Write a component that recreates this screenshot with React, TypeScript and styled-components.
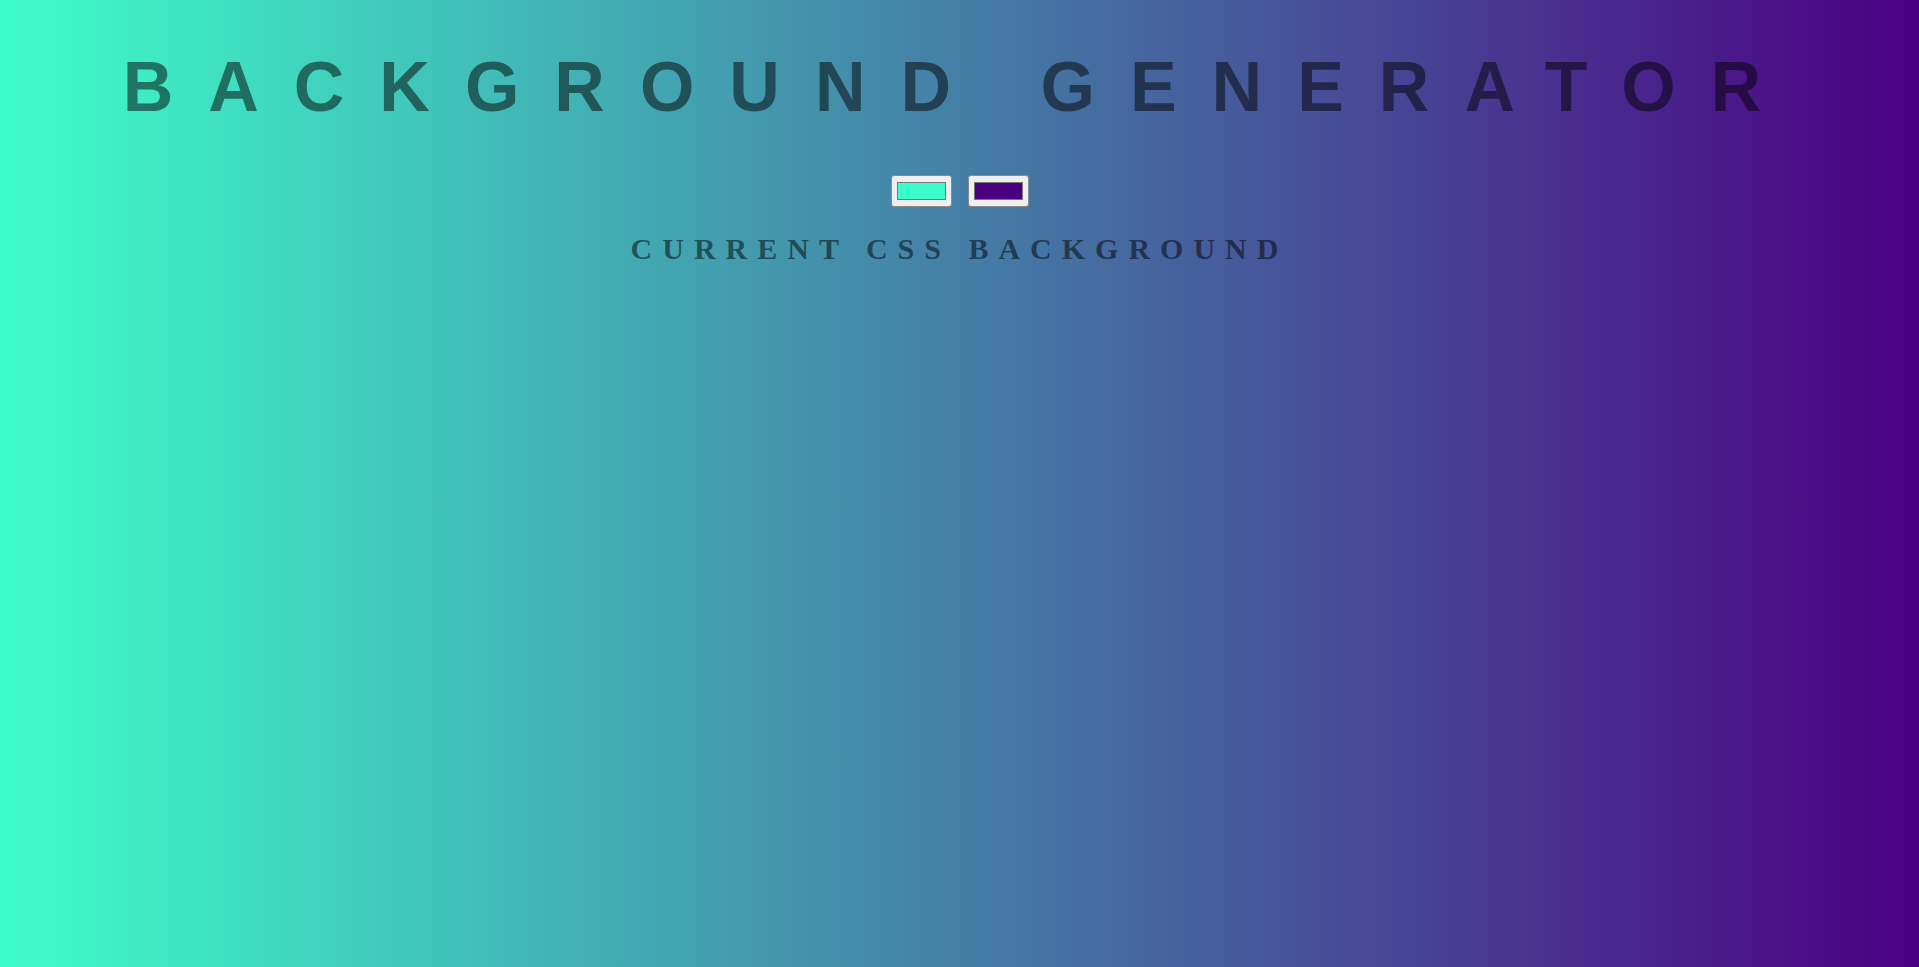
import React, { useState } from "react";
import styled, { createGlobalStyle } from "styled-components";

const GlobalStyle = createGlobalStyle`
  html, body {
    margin: 0;
    padding: 0;
  }
  body {
    font-family: "Liberation Sans", Arial, sans-serif;
  }
`;

const Page = styled.div<{ $from: string; $to: string }>`
  min-height: 100vh;
  box-sizing: border-box;
  padding-top: 47px;
  display: flex;
  flex-direction: column;
  align-items: center;
  background: linear-gradient(to right, ${(p) => p.$from}, ${(p) => p.$to});
  color: rgba(0, 0, 0, 0.5);
  text-transform: uppercase;
`;

const Title = styled.h1`
  margin: 0 0 48px;
  font-family: "Liberation Sans", Arial, sans-serif;
  font-weight: 700;
  font-size: 70px;
  line-height: normal;
  letter-spacing: 0.5em;
  white-space: nowrap;
`;

const Pickers = styled.div`
  display: flex;
  gap: 16px;
  height: 32px;
`;

const ColorInput = styled.input`
  -webkit-appearance: none;
  appearance: none;
  box-sizing: border-box;
  width: 61px;
  height: 32px;
  margin: 0;
  padding: 0;
  border: 1px solid #8a8a8a;
  border-radius: 3px;
  background: #efefef;
  cursor: pointer;

  &::-webkit-color-swatch-wrapper {
    padding: 6px 5px;
  }
  &::-webkit-color-swatch {
    border: 1px solid #777777;
    border-radius: 0;
  }
`;

const Subtitle = styled.h3`
  margin: 25px 0 0;
  font-family: "Liberation Serif", "Times New Roman", serif;
  font-weight: 700;
  font-size: 30px;
  line-height: normal;
  letter-spacing: 10px;
  white-space: nowrap;
`;

export default function App() {
  const [from, setFrom] = useState("#3efdca");
  const [to, setTo] = useState("#4b0082");
  return (
    <>
      <GlobalStyle />
      <Page $from={from} $to={to}>
        <Title>Background Generator</Title>
        <Pickers>
          <ColorInput
            type="color"
            value={from}
            onChange={(e) => setFrom(e.target.value)}
            aria-label="First color"
          />
          <ColorInput
            type="color"
            value={to}
            onChange={(e) => setTo(e.target.value)}
            aria-label="Second color"
          />
        </Pickers>
        <Subtitle>Current CSS Background</Subtitle>
      </Page>
    </>
  );
}
